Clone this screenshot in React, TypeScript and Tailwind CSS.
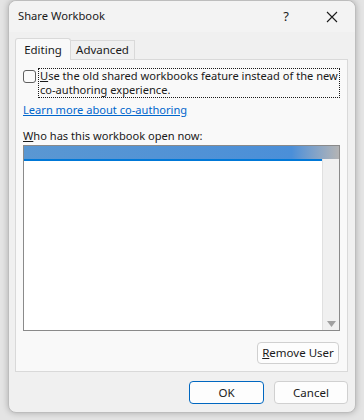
import React from 'react';

const font = { fontFamily: '"Noto Sans", "Liberation Sans", sans-serif' };

const Button = ({ children, primary }: { children: React.ReactNode; primary?: boolean }) => (
  <button
    className={
      primary
        ? 'h-[23px] w-[75px] rounded-[4px] border border-[#0067c0] bg-[#fdfdfd] text-[11.5px] text-[#1a1a1a]'
        : 'h-[23px] w-[74px] rounded-[4px] border border-[#d0d0d0] bg-[#fdfdfd] text-[11.5px] text-[#1a1a1a]'
    }
  >
    {children}
  </button>
);

export default function App() {
  return (
    <div className="w-[364px] h-[420px] bg-[#e4e4e4] px-[8px] overflow-hidden" style={font}>
      <div className="w-[348px] h-[413px] bg-[#f0f0f0] rounded-[8px] border border-[#bdbdbd] shadow-[0_0_6px_rgba(0,0,0,0.25)] flex flex-col">
        {/* Title bar */}
        <div className="h-[31px] flex items-center pl-[9px] text-[11.2px] text-[#1a1a1a] bg-[#f3f3f3] rounded-t-[8px]">
          <span className="flex-1">Share Workbook</span>
          <span className="w-[46px] text-center text-[13px]">?</span>
          <span className="w-[46px] flex justify-center">
            <svg width="12" height="12" viewBox="0 0 12 12" stroke="#1a1a1a" strokeWidth="1.1">
              <path d="M1 1 L11 11 M11 1 L1 11" />
            </svg>
          </span>
        </div>

        {/* Tabs */}
        <div className="mt-[6px] ml-[6px] flex items-end h-[22px] relative z-10">
          <div className="h-[22px] w-[56px] border border-b-0 border-[#d9d9d9] bg-[#f9f9f9] rounded-t-[3px] flex items-center justify-center text-[11.5px] text-[#1a1a1a]">
            Editing
          </div>
          <div className="h-[19px] w-[64px] border border-l-0 border-b-0 border-[#d9d9d9] bg-[#f0f0f0] flex items-center justify-center text-[11.5px] text-[#1a1a1a] mb-[1px]">
            Advanced
          </div>
        </div>

        {/* Panel */}
        <div className="-mt-[1px] ml-[6px] mr-[7px] h-[313px] border border-[#d9d9d9] bg-[#f9f9f9] px-[7px] pt-[8px] flex flex-col text-[11.1px] text-[#1a1a1a]">
          <div className="flex items-start">
            <div className="mt-[2px] w-[13px] h-[13px] rounded-[3px] border border-[#5f5f5f] bg-[#fbfbfb] shrink-0" />
            <div className="ml-[2px] flex-1 border border-dotted border-[#1a1a1a] px-[1px] leading-[14px] whitespace-nowrap">
              <span className="underline">U</span>se the old shared workbooks feature instead of the new
              <br />
              co-authoring experience.
            </div>
          </div>
          <div className="mt-[5px] text-[#0066cc] underline leading-[14px]">Learn more about co-authoring</div>
          <div className="mt-[12px] leading-[14px]">
            <span className="underline">W</span>ho has this workbook open now:
          </div>
          {/* List box */}
          <div className="mt-[2px] h-[186px] border border-[#8a8a8a] bg-white flex flex-col">
            <div className="h-[13px] bg-linear-to-r from-[#5a97d2] via-[#4b8fd8] via-[85%] to-[#b4b4b4]" />
            <div className="flex flex-1">
              <div className="flex-1 flex flex-col">
                <div className="h-[2px] bg-[#0078d7]" />
              </div>
              <div className="w-[17px] bg-[#f0f0f0] border-l border-[#e0e0e0] flex flex-col justify-end items-center pb-[3px]">
                <svg width="9" height="6" viewBox="0 0 9 6">
                  <path d="M0 0 L9 0 L4.5 6 Z" fill="#a0a0a0" />
                </svg>
              </div>
            </div>
          </div>
          <div className="mt-[11px] flex justify-end pr-[1px]">
            <button className="h-[22px] w-[82px] rounded-[4px] border border-[#d0d0d0] bg-[#fdfdfd] text-[11.5px] text-[#1a1a1a]">
              <span className="underline">R</span>emove User
            </button>
          </div>
        </div>

        {/* Footer */}
        <div className="mt-[9px] mr-[7px] flex justify-end gap-[10px]">
          <Button primary>OK</Button>
          <Button>Cancel</Button>
        </div>
      </div>
    </div>
  );
}
